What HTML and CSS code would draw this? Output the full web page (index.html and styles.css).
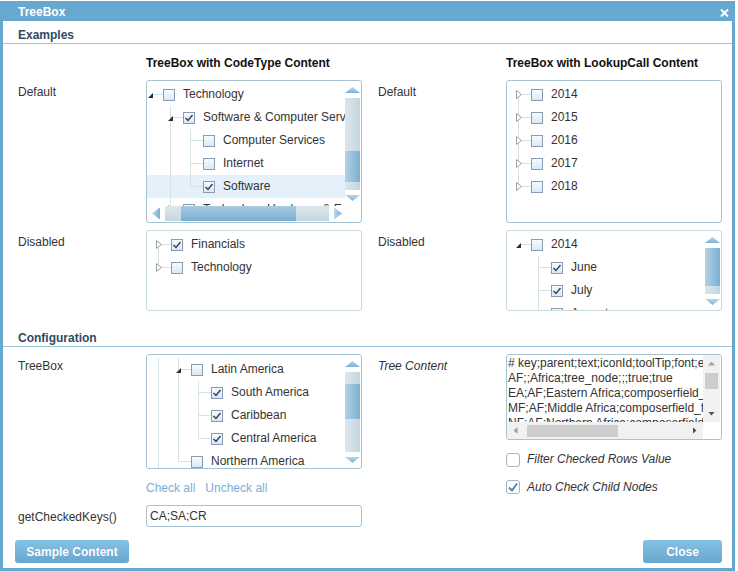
FILE: index.html
```html
<!DOCTYPE html>
<html>
<head>
<meta charset="utf-8">
<title>TreeBox</title>
<link rel="stylesheet" href="styles.css">
</head>
<body>
<div class="window">
  <div class="titlebar">
    <span class="title">TreeBox</span>
    <svg class="close" width="9" height="8" viewBox="0 0 9 8"><path d="M1 0.5 L8 7.5 M8 0.5 L1 7.5" stroke="#fff" stroke-width="2"/></svg>
  </div>

  <div class="section">Examples</div>
  <div class="grid examples">
    <div></div>
    <div class="colhead">TreeBox with CodeType Content</div>
    <div></div>
    <div class="colhead">TreeBox with LookupCall Content</div>

    <div class="label">Default</div>
    <div class="tbox vs hs">
      <div class="tcontent">
        <div class="shift">
          <div class="row"><span class="node n"><i class="exp-open"></i></span><span class="cb"></span><span class="txt">Technology</span></div>
          <div class="row"><span class="ind"></span><span class="node t"><i class="exp-open"></i></span><span class="cb on"><svg viewBox="0 0 12 12"><path d="M2.5 6 L5 8.5 L9.5 3"/></svg></span><span class="txt">Software &amp; Computer Services</span></div>
          <div class="row"><span class="ind"></span><span class="ind v"></span><span class="node t"></span><span class="cb"></span><span class="txt">Computer Services</span></div>
          <div class="row"><span class="ind"></span><span class="ind v"></span><span class="node t"></span><span class="cb"></span><span class="txt">Internet</span></div>
          <div class="row sel"><span class="ind"></span><span class="ind v"></span><span class="node l"></span><span class="cb on"><svg viewBox="0 0 12 12"><path d="M2.5 6 L5 8.5 L9.5 3"/></svg></span><span class="txt">Software</span></div>
          <div class="row"><span class="ind"></span><span class="node t"><svg class="exp-closed" viewBox="0 0 6 9"><path d="M0.5 0.5 L5.5 4.5 L0.5 8.5 Z"/></svg></span><span class="cb"></span><span class="txt">Technology Hardware &amp; Equipment</span></div>
        </div>
      </div>
      <div class="vscroll"><i class="arr up"></i><div class="track"><div class="thumb" style="margin-top:53px;height:31px"></div></div><i class="arr down"></i></div>
      <div class="hscroll"><i class="arr left"></i><div class="track"><div class="thumb" style="margin-left:16px;width:115px"></div></div><i class="arr right"></i></div>
      <div></div>
    </div>

    <div class="label r">Default</div>
    <div class="tbox">
      <div class="tcontent">
        <div class="row"><span class="node f"><svg class="exp-closed" viewBox="0 0 6 9"><path d="M0.5 0.5 L5.5 4.5 L0.5 8.5 Z"/></svg></span><span class="cb"></span><span class="txt">2014</span></div>
        <div class="row"><span class="node t"><svg class="exp-closed" viewBox="0 0 6 9"><path d="M0.5 0.5 L5.5 4.5 L0.5 8.5 Z"/></svg></span><span class="cb"></span><span class="txt">2015</span></div>
        <div class="row"><span class="node t"><svg class="exp-closed" viewBox="0 0 6 9"><path d="M0.5 0.5 L5.5 4.5 L0.5 8.5 Z"/></svg></span><span class="cb"></span><span class="txt">2016</span></div>
        <div class="row"><span class="node t"><svg class="exp-closed" viewBox="0 0 6 9"><path d="M0.5 0.5 L5.5 4.5 L0.5 8.5 Z"/></svg></span><span class="cb"></span><span class="txt">2017</span></div>
        <div class="row"><span class="node l"><svg class="exp-closed" viewBox="0 0 6 9"><path d="M0.5 0.5 L5.5 4.5 L0.5 8.5 Z"/></svg></span><span class="cb"></span><span class="txt">2018</span></div>
      </div>
    </div>

    <div class="label">Disabled</div>
    <div class="tbox dis">
      <div class="tcontent">
        <div class="row"><span class="node f"><svg class="exp-closed" viewBox="0 0 6 9"><path d="M0.5 0.5 L5.5 4.5 L0.5 8.5 Z"/></svg></span><span class="cb on"><svg viewBox="0 0 12 12"><path d="M2.5 6 L5 8.5 L9.5 3"/></svg></span><span class="txt">Financials</span></div>
        <div class="row"><span class="node l"><svg class="exp-closed" viewBox="0 0 6 9"><path d="M0.5 0.5 L5.5 4.5 L0.5 8.5 Z"/></svg></span><span class="cb"></span><span class="txt">Technology</span></div>
      </div>
    </div>

    <div class="label r">Disabled</div>
    <div class="tbox dis vs">
      <div class="tcontent">
        <div class="row"><span class="node n"><i class="exp-open"></i></span><span class="cb"></span><span class="txt">2014</span></div>
        <div class="row"><span class="ind"></span><span class="node t"></span><span class="cb on"><svg viewBox="0 0 12 12"><path d="M2.5 6 L5 8.5 L9.5 3"/></svg></span><span class="txt">June</span></div>
        <div class="row"><span class="ind"></span><span class="node t"></span><span class="cb on"><svg viewBox="0 0 12 12"><path d="M2.5 6 L5 8.5 L9.5 3"/></svg></span><span class="txt">July</span></div>
        <div class="row"><span class="ind"></span><span class="node t"></span><span class="cb"></span><span class="txt">August</span></div>
      </div>
      <div class="vscroll"><i class="arr up"></i><div class="track"><div class="thumb" style="margin-top:0;height:38px"></div></div><i class="arr down"></i></div>
    </div>
  </div>

  <div class="section cfg">Configuration</div>
  <div class="grid config">
    <div class="label">TreeBox</div>
    <div class="tbox vs">
      <div class="tcontent deep">
        <div class="row"><span class="ind v"></span><span class="node t"><i class="exp-open"></i></span><span class="cb"></span><span class="txt">Latin America</span></div>
        <div class="row"><span class="ind v"></span><span class="ind v"></span><span class="node t"></span><span class="cb on"><svg viewBox="0 0 12 12"><path d="M2.5 6 L5 8.5 L9.5 3"/></svg></span><span class="txt">South America</span></div>
        <div class="row"><span class="ind v"></span><span class="ind v"></span><span class="node t"></span><span class="cb on"><svg viewBox="0 0 12 12"><path d="M2.5 6 L5 8.5 L9.5 3"/></svg></span><span class="txt">Caribbean</span></div>
        <div class="row"><span class="ind v"></span><span class="ind v"></span><span class="node l"></span><span class="cb on"><svg viewBox="0 0 12 12"><path d="M2.5 6 L5 8.5 L9.5 3"/></svg></span><span class="txt">Central America</span></div>
        <div class="row"><span class="ind v"></span><span class="node l"></span><span class="cb"></span><span class="txt">Northern America</span></div>
      </div>
      <div class="vscroll"><i class="arr up"></i><div class="track"><div class="thumb" style="margin-top:12px;height:35px"></div></div><i class="arr down"></i></div>
    </div>
    <div class="label r it">Tree Content</div>
    <div class="rightcell">
      <div class="textarea">
        <div class="ta-text">
          <div># key;parent;text;iconId;toolTip;font;enabled;active;checked</div>
          <div>AF;;Africa;tree_node;;;true;true</div>
          <div>EA;AF;Eastern Africa;composerfield_form;;;true;true</div>
          <div>MF;AF;Middle Africa;composerfield_form;;;true;true</div>
          <div>NF;AF;Northern Africa;composerfield_form;;;true;true</div>
        </div>
        <div class="ta-vs"><div class="ta-btn"><i class="g up light"></i></div><div class="ta-track v"><div class="ta-thumb" style="margin-top:1px;height:16px"></div></div><div class="ta-btn"><i class="g down"></i></div></div>
        <div class="ta-hs"><div class="ta-btn"><i class="g left light"></i></div><div class="ta-track h"><div class="ta-thumb" style="margin-left:3px;width:91px"></div></div><div class="ta-btn"><i class="g right"></i></div></div>
        <div class="ta-corner"></div>
      </div>
      <div class="check filter"><span class="chk"></span><span class="chklabel">Filter Checked Rows Value</span></div>
    </div>

    <div></div>
    <div class="links"><span class="link">Check all</span><span class="link">Uncheck all</span></div>
    <div></div>
    <div class="check"><span class="chk"><svg viewBox="0 0 14 14"><path d="M3 7.5 L6 10.5 L11 3.5"/></svg></span><span class="chklabel">Auto Check Child Nodes</span></div>

    <div class="label mid">getCheckedKeys()</div>
    <div class="input">CA;SA;CR</div>
    <div></div>
    <div></div>
  </div>

  <div class="buttons">
    <span class="btn sample">Sample Content</span>
    <span class="btn closebtn">Close</span>
  </div>
</div>
</body>
</html>
```

FILE: styles.css
```css
* { box-sizing: border-box; }
html, body { margin: 0; padding: 0; background: #fff; }
body {
  font-family: "Liberation Sans", Arial, sans-serif;
  font-size: 12px;
  color: #333;
}
.window {
  width: 735px;
  height: 570px;
  margin-top: 1px;
  border: 3px solid #66a8cf;
  border-top: 0;
  display: flex;
  flex-direction: column;
}
.titlebar {
  height: 20px;
  flex: none;
  background: #66a8cf;
  display: flex;
  justify-content: space-between;
  align-items: flex-start;
  padding: 4px 0 0 15px;
}
.title { font-weight: bold; color: #fff; line-height: 15px; }
.close { margin: 4px 3px 0 0; }

.section {
  padding: 7px 0 0 15px;
  line-height: 15px;
  font-weight: bold;
  color: #2f4b62;
  border-bottom: 1px solid #9cc5de;
  flex: none;
}
.section.cfg { margin-top: 13px; }

.grid {
  display: grid;
  grid-template-columns: 128px 216px 144px 216px;
  margin-left: 15px;
}
.examples { grid-template-rows: 18px 143px 81px; row-gap: 7px; margin-top: 11px; }
.config { grid-template-rows: 115px 36px 22px; margin-top: 7px; }

.colhead { font-weight: bold; color: #111; line-height: 15px; padding-top: 1px; }
.label { padding-top: 5px; line-height: 15px; color: #333; }
.label.r { padding-left: 16px; }
.label.it { font-style: italic; }
.label.mid { padding-top: 2px; align-self: center; }

/* tree box */
.tbox {
  border: 1px solid #a6c4d4;
  border-radius: 3px;
  display: grid;
  grid-template-columns: minmax(0, 1fr);
  grid-template-rows: minmax(0, 1fr);
  overflow: hidden;
}
.tbox.vs { grid-template-columns: minmax(0, 1fr) 15px; padding-right: 1px; }
.tbox.hs { grid-template-rows: minmax(0, 1fr) 15px; padding-bottom: 1px; }
.tbox.dis { border-color: #c9d9e0; }
.tcontent { overflow: hidden; padding-top: 2px; min-height: 0; }
.tcontent.deep { padding-top: 3px; }
.shift { margin-left: -8px; }

.row {
  display: flex;
  align-items: center;
  height: 23px;
  white-space: nowrap;
}
.row.sel { background: #e4f1fb; }
.ind, .node { height: 23px; flex: none; position: relative; }
.ind { width: 20px; }
.node { width: 24px; }
.ind.v::before, .node::before {
  content: "";
  position: absolute;
  left: 11px;
  border-left: 1px solid #d3e3e6;
}
.ind.v::before { top: 0; bottom: 0; }
.node::after {
  content: "";
  position: absolute;
  left: 11px;
  right: 0;
  top: 11px;
  border-top: 1px solid #d3e3e6;
}
.node.t::before { top: 0; bottom: 0; }
.node.l::before { top: 0; height: 12px; }
.node.f::before { top: 11px; bottom: 0; }
.node.n::before { display: none; }

.exp-open {
  position: absolute;
  left: 9px;
  top: 10px;
  width: 5px;
  height: 5px;
  background: #2e2e2e;
  clip-path: polygon(100% 0, 100% 100%, 0 100%);
  z-index: 1;
}
.exp-closed {
  position: absolute;
  left: 9px;
  top: 7px;
  width: 6px;
  height: 9px;
  z-index: 1;
}
.exp-closed path { fill: #fff; stroke: #a0a0a0; stroke-width: 1; }

.cb {
  width: 12px;
  height: 12px;
  flex: none;
  border: 1px solid #8a9ab0;
  background: linear-gradient(#f7fbff, #d8e9f6);
  position: relative;
}
.cb svg { position: absolute; left: -1px; top: -1px; width: 12px; height: 12px; }
.cb svg path { fill: none; stroke: #34455c; stroke-width: 1.5; }
.txt { margin-left: 8px; line-height: 15px; color: #333; }

/* blue scrollbars */
.vscroll {
  display: flex;
  flex-direction: column;
  padding: 6px 0 5px;
  gap: 5px;
  min-height: 0;
}
.hscroll {
  display: flex;
  align-items: stretch;
  padding: 0 3px 0 5px;
  gap: 5px;
}
.arr { display: block; flex: none; background: linear-gradient(#b7d7eb, #7bb1d6); }
.vscroll .arr { width: 15px; height: 6px; }
.hscroll .arr { width: 8px; height: 12px; align-self: center; background: linear-gradient(to right, #b7d7eb, #7bb1d6); }
.arr.up { clip-path: polygon(50% 0, 100% 100%, 0 100%); }
.arr.down { clip-path: polygon(0 0, 100% 0, 50% 100%); }
.arr.left { clip-path: polygon(100% 0, 100% 100%, 0 50%); }
.arr.right { clip-path: polygon(0 0, 100% 50%, 0 100%); }
.vscroll .track {
  flex: 1;
  min-height: 0;
  background: linear-gradient(to right, #dce7ed, #c5d6e0);
  display: flex;
  flex-direction: column;
}
.vscroll .thumb { flex: none; background: linear-gradient(to right, #b4d1e3, #7aafd4); }
.hscroll .track {
  flex: 1;
  background: linear-gradient(#dce7ed, #c5d6e0);
  display: flex;
}
.hscroll .thumb { flex: none; background: linear-gradient(#a9cbe1, #78add3); }

/* textarea */
.rightcell { display: flex; flex-direction: column; align-items: flex-start; }
.textarea {
  width: 100%;
  height: 86px;
  border: 1px solid #a6c4d4;
  border-radius: 3px;
  display: grid;
  grid-template-columns: minmax(0, 1fr) 17px;
  grid-template-rows: minmax(0, 1fr) 17px;
  padding-right: 1px;
  overflow: hidden;
}
.ta-text {
  overflow: hidden;
  white-space: nowrap;
  line-height: 15px;
  padding: 1px 0 0 1px;
  color: #333;
  min-height: 0;
}
.ta-vs { display: flex; flex-direction: column; background: #f1f1f1; min-height: 0; }
.ta-hs { display: flex; background: #f1f1f1; }
.ta-corner { background: #fff; }
.ta-btn { width: 17px; height: 17px; flex: none; display: flex; align-items: center; justify-content: center; }
.ta-track { flex: 1; display: flex; min-height: 0; }
.ta-track.v { flex-direction: column; padding: 0 2px; }
.ta-track.h { padding: 3px 0 2px; }
.ta-thumb { flex: none; background: #cdcdcd; }
.ta-track.v .ta-thumb { width: 100%; }
.g { display: block; background: #505050; }
.g.light { background: #a3a3a3; }
.g.up, .g.down { width: 7px; height: 4px; }
.g.left, .g.right { width: 4px; height: 7px; }
.g.up { clip-path: polygon(50% 0, 100% 100%, 0 100%); }
.g.down { clip-path: polygon(0 0, 100% 0, 50% 100%); }
.g.left { clip-path: polygon(100% 0, 100% 100%, 0 50%); }
.g.right { clip-path: polygon(0 0, 100% 50%, 0 100%); }

.check { display: flex; align-items: center; align-self: center; }
.check.filter { margin-top: 12px; align-self: flex-start; }
.chk {
  width: 14px;
  height: 14px;
  flex: none;
  border: 1px solid #a1b7c8;
  border-radius: 3px;
  background: #fff;
  position: relative;
}
.chk svg { position: absolute; left: -1px; top: -1px; width: 14px; height: 14px; }
.chk svg path { fill: none; stroke: #4e86bf; stroke-width: 2; }
.chklabel { margin-left: 7px; font-style: italic; line-height: 15px; color: #333; }

.links { display: flex; align-items: center; gap: 10px; padding-top: 2px; }
.link { color: #78aed6; line-height: 15px; }

.input {
  border: 1px solid #a6c4d4;
  border-radius: 3px;
  padding-left: 3px;
  line-height: 20px;
  color: #333;
}

.buttons {
  display: flex;
  justify-content: space-between;
  margin: 13px 10px 0 12px;
}
.btn {
  height: 23px;
  padding-top: 2px;
  line-height: 21px;
  border-radius: 3px;
  background: linear-gradient(#86c2e4, #67a6cf);
  color: #fff;
  font-weight: bold;
  text-align: center;
  text-shadow: 0 0 1px rgba(60, 110, 150, 0.4);
}
.btn.sample { width: 114px; }
.btn.closebtn { width: 79px; }
```
